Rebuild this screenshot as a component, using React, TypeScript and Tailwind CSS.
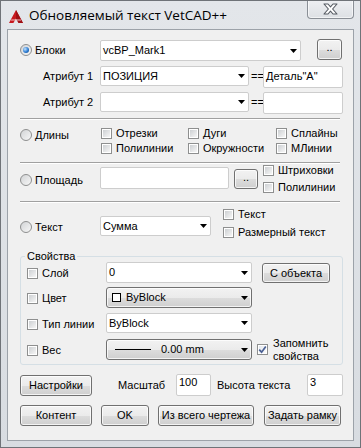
import React from 'react';

const btnBg =
  'border border-[#707070] rounded-[3px] bg-[linear-gradient(#f2f2f2_0%,#ebebeb_50%,#dddddd_50%,#cfcfcf_100%)] shadow-[inset_0_0_0_1px_rgba(255,255,255,0.75)]';

const Arrow = () => (
  <svg width="7" height="4" viewBox="0 0 7 4" className="shrink-0">
    <path d="M0 0H7L3.5 4Z" fill="#000" />
  </svg>
);

const Radio = ({ checked = false }: { checked?: boolean }) => (
  <span className="w-[12px] h-[12px] shrink-0 rounded-full border border-[#8e8f8f] bg-[linear-gradient(135deg,#d2d4d6,#f7f7f7)] flex items-center justify-center">
    {checked && (
      <span className="w-[6px] h-[6px] rounded-full bg-[radial-gradient(circle_at_35%_35%,#c4e4ff,#2b7bd2_55%,#0c3c7c)]" />
    )}
  </span>
);

const RadioLabel = ({ label, checked = false, className = '' }: { label: string; checked?: boolean; className?: string }) => (
  <div className={`flex items-center gap-[3px] h-[14px] ${className}`}>
    <Radio checked={checked} />
    <span>{label}</span>
  </div>
);

const Box = ({ checked = false }: { checked?: boolean }) => (
  <span className="w-[11px] h-[11px] shrink-0 border border-[#8e8f8f] bg-white p-[1px] flex">
    <span
      className={`flex-1 flex items-center justify-center ${
        checked ? 'bg-[linear-gradient(135deg,#e4e8ee,#fbfbfb)]' : 'bg-[linear-gradient(135deg,#cdd0d3,#f6f6f6)]'
      }`}
    >
      {checked && (
        <svg width="9" height="9" viewBox="0 0 9 9" className="shrink-0 -m-[1px]">
          <path d="M1.2 4.6 L3.6 7.2 L7.8 1.4" fill="none" stroke="#4a6094" strokeWidth="1.7" />
        </svg>
      )}
    </span>
  </span>
);

const Check = ({ label, checked = false, className = '' }: { label: string; checked?: boolean; className?: string }) => (
  <div className={`flex items-center gap-[4px] ${className}`}>
    <Box checked={checked} />
    <span>{label}</span>
  </div>
);

const Edit = ({ value = '', className = '' }: { value?: string; className?: string }) => (
  <div className={`bg-white border border-[#cdcdcd] rounded-[2px] pl-[2px] ${className}`}>{value}</div>
);

const Combo = ({ value = '', className = '' }: { value?: string; className?: string }) => (
  <div className={`bg-white border border-[#cdcdcd] rounded-[2px] flex items-center pl-[2px] pr-[3px] ${className}`}>
    <span className="flex-1">{value}</span>
    <Arrow />
  </div>
);

const ComboBtn = ({ children, className = '' }: { children: React.ReactNode; className?: string }) => (
  <div className={`${btnBg} flex items-center pr-[3px] ${className}`}>
    <div className="flex-1 flex items-center">{children}</div>
    <Arrow />
  </div>
);

const Btn = ({ label, className = '' }: { label: string; className?: string }) => (
  <button type="button" className={`${btnBg} flex items-center justify-center leading-[13px] shrink-0 ${className}`}>
    {label}
  </button>
);

const Sep = ({ className = '' }: { className?: string }) => (
  <div className={`w-[320px] border-t border-t-[#a0a0a0] border-b border-b-white ${className}`} />
);

const AcadIcon = () => (
  <svg width="14" height="13" viewBox="0 0 14 13">
    <path d="M7 0 L14 13 L9.6 13 L7 8.4 L4.4 13 L0 13 Z" fill="#c8181e" />
    <path d="M7 0 L14 13 L9.6 13 L7 8.4 Z" fill="#9e0f14" />
    <path d="M2.4 9.4 H11.6 L12.2 10.6 H1.8 Z" fill="#f3c2c2" />
  </svg>
);

const CloseGlyph = () => (
  <svg width="15" height="12" viewBox="0 0 15 12">
    <path
      d="M1 1 H5 L7.5 3.8 L10 1 H14 L9.6 6 L14 11 H10 L7.5 8.2 L5 11 H1 L5.4 6 Z"
      fill="#ffffff"
      stroke="#555a62"
      strokeWidth="1.1"
      strokeLinejoin="round"
    />
  </svg>
);

export default function App() {
  return (
    <div className="w-[361px] h-[448px] bg-[linear-gradient(#e3e6ea,#d8dce1)] border border-[#6f7378] flex flex-col font-['Liberation_Sans',Arial,sans-serif] text-[11px] leading-[13px] text-black overflow-hidden">
      {/* title bar */}
      <div className="h-[28px] flex items-start shrink-0">
        <div className="ml-[8px] mt-[9px]">
          <AcadIcon />
        </div>
        <span className="ml-[6px] mt-[6px] text-[13.5px] leading-[17px] font-['Open_Sans','Liberation_Sans',sans-serif]">
          Обновляемый текст VetCAD++
        </span>
        <div className="ml-auto mr-[6px] -mt-[1px] w-[47px] h-[19px] rounded-b-[4px] border border-t-0 border-[#8a8f96] bg-[linear-gradient(#eef0f3,#dde0e4)] shadow-[inset_0_0_0_1px_rgba(255,255,255,0.6)] flex items-center justify-center">
          <CloseGlyph />
        </div>
      </div>

      {/* client area */}
      <div className="mx-[6px] mb-[6px] flex-1 bg-[#f0f0f0] border border-[#9ca2a9] pl-[12px] pr-[10px] flex flex-col">
        {/* Блоки */}
        <div className="mt-[9px] h-[22px] flex items-start">
          <div className="w-[80px] h-full flex items-center">
            <RadioLabel label="Блоки" checked />
          </div>
          <Combo value="vcBP_Mark1" className="w-[201px] h-[21px] mt-[1px]" />
          <Btn label=".." className="ml-[16px] w-[25px] h-[21px] pb-[4px]" />
        </div>

        {/* Атрибут 1 */}
        <div className="mt-[5px] h-[22px] flex items-start">
          <div className="w-[80px] h-[20px] pl-[23px] flex items-center">Атрибут 1</div>
          <Combo value="ПОЗИЦИЯ" className="w-[149px] h-[20px]" />
          <span className="w-[14px] h-[20px] flex items-center pl-[2px]">==</span>
          <Edit value={'Деталь"А"'} className="w-[80px] h-[22px] pt-[3px]" />
        </div>

        {/* Атрибут 2 */}
        <div className="mt-[4px] h-[22px] flex items-start">
          <div className="w-[80px] h-[20px] pl-[23px] flex items-center">Атрибут 2</div>
          <Combo className="w-[149px] h-[20px]" />
          <span className="w-[14px] h-[20px] flex items-center pl-[2px]">==</span>
          <Edit className="w-[80px] h-[22px]" />
        </div>

        <Sep className="mt-[4px]" />

        {/* Длины */}
        <div className="mt-[6px] flex items-start">
          <div className="w-[80px]">
            <RadioLabel label="Длины" className="mt-[2px]" />
          </div>
          <div className="grid grid-cols-[88px_88px_auto] gap-y-[1px]">
            <Check label="Отрезки" className="h-[14px] pl-[1px]" />
            <Check label="Дуги" className="h-[14px]" />
            <Check label="Сплайны" className="h-[14px]" />
            <Check label="Полилинии" className="h-[14px] pl-[1px]" />
            <Check label="Окружности" className="h-[14px]" />
            <Check label="МЛинии" className="h-[14px]" />
          </div>
        </div>

        <Sep className="mt-[7px]" />

        {/* Площадь */}
        <div className="flex items-start">
          <div className="w-[80px]">
            <RadioLabel label="Площадь" className="mt-[9px]" />
          </div>
          <Edit className="w-[129px] h-[22px] mt-[3px]" />
          <Btn label=".." className="ml-[5px] w-[24px] h-[20px] mt-[5px] pb-[4px]" />
          <div className="ml-[5px] flex flex-col gap-[4px]">
            <Check label="Штриховки" className="h-[13px]" />
            <Check label="Полилинии" className="h-[13px]" />
          </div>
        </div>

        <Sep className="mt-[7px]" />

        {/* Текст */}
        <div className="flex items-start">
          <div className="w-[80px]">
            <RadioLabel label="Текст" className="mt-[17px]" />
          </div>
          <Combo value="Сумма" className="w-[111px] h-[20px] mt-[13px]" />
          <div className="ml-[12px] mt-[5px] flex flex-col gap-[5px]">
            <Check label="Текст" className="h-[13px]" />
            <Check label="Размерный текст" className="h-[13px]" />
          </div>
        </div>

        {/* Свойства */}
        <fieldset className="mt-[11px] w-[323px] border border-[#d5dfe5] rounded-[3px] pb-[4px]">
          <legend className="ml-[4px] px-[2px] leading-[12px]">Свойства</legend>

          <div className="h-[21px] flex items-start">
            <div className="w-[85px] h-full pl-[6px] pt-[2px] flex items-center">
              <Check label="Слой" />
            </div>
            <Combo value="0" className="w-[146px] h-[21px]" />
            <Btn label="С объекта" className="ml-[10px] w-[68px] h-[20px] mt-[1px]" />
          </div>

          <div className="mt-[4px] h-[21px] flex items-start">
            <div className="w-[85px] h-full pl-[6px] pt-[2px] flex items-center">
              <Check label="Цвет" />
            </div>
            <ComboBtn className="w-[146px] h-[21px]">
              <span className="ml-[5px] w-[9px] h-[9px] border border-black bg-white" />
              <span className="ml-[5px]">ByBlock</span>
            </ComboBtn>
          </div>

          <div className="mt-[5px] h-[20px] flex items-start">
            <div className="w-[85px] h-full pl-[6px] pt-[2px] flex items-center">
              <Check label="Тип линии" />
            </div>
            <Combo value="ByBlock" className="w-[146px] h-[20px]" />
          </div>

          <div className="mt-[6px] h-[21px] flex items-center">
            <div className="w-[85px] h-full pl-[6px] pt-[2px] flex items-center">
              <Check label="Вес" />
            </div>
            <ComboBtn className="w-[146px] h-[21px]">
              <span className="ml-[8px] w-[36px] border-t border-black" />
              <span className="ml-[10px]">0.00 mm</span>
            </ComboBtn>
            <div className="ml-[5px] flex items-center gap-[5px]">
              <Box checked />
              <span className="leading-[13px]">
                Запомнить
                <br />
                свойства
              </span>
            </div>
          </div>
        </fieldset>

        {/* Масштаб row */}
        <div className="mt-[9px] h-[22px] flex items-start">
          <Btn label="Настройки" className="w-[72px] h-[21px] mt-[1px]" />
          <span className="ml-[26px] w-[58px] h-[22px] flex items-center">Масштаб</span>
          <Edit value="100" className="w-[35px] h-[22px] pt-[1px]" />
          <span className="ml-[6px] w-[90px] h-[22px] flex items-center">Высота текста</span>
          <Edit value="3" className="w-[36px] h-[22px] pt-[1px]" />
        </div>

        {/* buttons */}
        <div className="mt-[9px] h-[21px] flex items-start">
          <Btn label="Контент" className="w-[72px] h-[21px]" />
          <Btn label="OK" className="ml-[9px] w-[48px] h-[21px]" />
          <Btn label="Из всего чертежа" className="ml-[9px] w-[96px] h-[21px]" />
          <Btn label="Задать рамку" className="ml-[10px] w-[77px] h-[21px]" />
        </div>
      </div>
    </div>
  );
}
